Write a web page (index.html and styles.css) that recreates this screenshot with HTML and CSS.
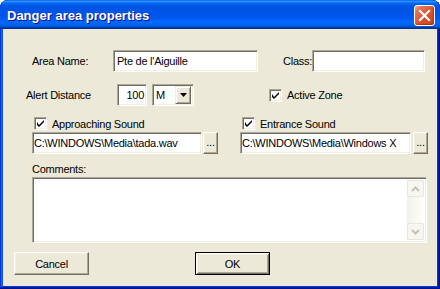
FILE: index.html
```html
<!DOCTYPE html>
<html>
<head>
<meta charset="utf-8">
<link rel="stylesheet" href="styles.css">
</head>
<body>
<div class="window">
  <div class="titlebar">
    <span class="title">Danger area properties</span>
    <button class="close" aria-label="Close">
      <svg width="13" height="13" viewBox="0 0 13 13"><path d="M2 2 L11 11 M11 2 L2 11" stroke="#fff" stroke-width="2.2" stroke-linecap="square"/></svg>
    </button>
  </div>
  <div class="client">
    <div class="row row-name">
      <span class="lbl lbl-name">Area Name:</span>
      <div class="field f-name">Pte de l'Aiguille</div>
      <span class="lbl lbl-class">Class:</span>
      <div class="field f-class"></div>
    </div>
    <div class="row row-alert">
      <span class="lbl lbl-alert">Alert Distance</span>
      <div class="field f-dist">100</div>
      <div class="field combo">
        <span class="combo-val">M</span>
        <span class="combo-btn"><svg width="7" height="4" viewBox="0 0 7 4"><path d="M0 0 H7 L3.5 4 Z" fill="#000"/></svg></span>
      </div>
      <div class="check check-active"><span class="box"><svg width="7" height="7" viewBox="0 0 7 7"><path d="M0 2 V5 L2 7 L7 2 V0 L2 5 Z" fill="#000"/></svg></span><span>Active Zone</span></div>
    </div>
    <div class="sounds">
      <div class="sound">
        <div class="check"><span class="box"><svg width="7" height="7" viewBox="0 0 7 7"><path d="M0 2 V5 L2 7 L7 2 V0 L2 5 Z" fill="#000"/></svg></span><span>Approaching Sound</span></div>
        <div class="path-row">
          <div class="field f-path f-path-l">C:\WINDOWS\Media\tada.wav</div>
          <button class="btn browse">...</button>
        </div>
      </div>
      <div class="sound">
        <div class="check"><span class="box"><svg width="7" height="7" viewBox="0 0 7 7"><path d="M0 2 V5 L2 7 L7 2 V0 L2 5 Z" fill="#000"/></svg></span><span>Entrance Sound</span></div>
        <div class="path-row">
          <div class="field f-path f-path-r">C:\WINDOWS\Media\Windows X</div>
          <button class="btn browse browse-r">...</button>
        </div>
      </div>
    </div>
    <div class="comments">
      <div class="lbl lbl-comments">Comments:</div>
      <div class="field memo">
        <div class="memo-text"></div>
        <div class="vscroll">
          <span class="sb-btn"><svg width="9" height="6" viewBox="0 0 9 6"><path d="M1 5 L4.5 1.5 L8 5" fill="none" stroke="#C5C2B2" stroke-width="2"/></svg></span>
          <span class="sb-track"></span>
          <span class="sb-btn"><svg width="9" height="6" viewBox="0 0 9 6"><path d="M1 1 L4.5 4.5 L8 1" fill="none" stroke="#C5C2B2" stroke-width="2"/></svg></span>
        </div>
      </div>
    </div>
    <div class="actions">
      <button class="btn btn-cancel">Cancel</button>
      <button class="btn btn-ok">OK</button>
    </div>
  </div>
</div>
</body>
</html>
```
FILE: styles.css
```css
* { box-sizing: border-box; }
body {
  margin: 0;
  font-family: "Liberation Sans", Arial, sans-serif;
  font-size: 11px;
  letter-spacing: -0.25px;
  color: #000;
  background: #fff;
}
.window {
  width: 440px;
  height: 289px;
  display: flex;
  flex-direction: column;
  background: #0855DD;
  border-radius: 8px 8px 0 0;
  overflow: hidden;
  box-shadow: inset -1px -1px #00138c, inset 1px 1px #0831d9, inset -2px -2px #001ea0, inset 2px 2px #166aee, inset -3px -3px #003bda, inset 3px 3px #0855dd;
}
.titlebar {
  flex: none;
  height: 29px;
  display: flex;
  align-items: center;
  padding: 0 5px 0 7px;
  border-radius: 8px 8px 0 0;
  background: linear-gradient(to bottom, #0058ee 0%, #3593ff 4%, #288eff 6%, #127dff 8%, #036ffc 10%, #0262ee 14%, #0057e5 20%, #0054e3 24%, #0055eb 56%, #005bf5 66%, #026afe 76%, #0062ef 86%, #0052d6 92%, #0040ab 94%, #003092 100%);
}
.title {
  color: #fff;
  font-family: "Liberation Sans", Arial, sans-serif;
  font-weight: bold;
  font-size: 13px;
  letter-spacing: 0;
  padding-top: 2px;
  text-shadow: 1px 1px #0f1089;
}
.close {
  margin-left: auto;
  margin-top: 2px;
  width: 21px;
  height: 21px;
  padding: 0;
  border: 1px solid #fff;
  border-radius: 3px;
  display: flex;
  align-items: center;
  justify-content: center;
  background: linear-gradient(135deg, #f0a48a 0%, #e3714e 22%, #d9552f 55%, #c7421c 100%);
  box-shadow: inset -1px -1px 1px rgba(140,30,0,.5);
}
.client {
  flex: 1;
  margin: 0 3px 3px 3px;
  background: #ECE9D8;
  display: flex;
  flex-direction: column;
}
.row {
  display: flex;
  align-items: center;
  height: 22px;
  flex: none;
}
.field {
  height: 22px;
  background: #fff;
  border: 1px solid;
  border-color: #ACA899 #fff #fff #ACA899;
  box-shadow: inset 1px 1px #716F64, inset -1px -1px #F1EFE2;
  padding: 0 2px;
  display: flex;
  align-items: center;
  white-space: nowrap;
  overflow: hidden;
}
.row-name { margin-top: 21px; }
.lbl-name { margin-left: 29px; width: 81px; }
.f-name { width: 145px; padding-left: 3px; }
.lbl-class { margin-left: 25px; width: 29px; }
.f-class { width: 113px; }
.row-alert { margin-top: 12px; }
.lbl-alert { margin-left: 23px; width: 91px; }
.f-dist { width: 30px; justify-content: flex-end; padding-right: 2px; }
.combo { margin-left: 5px; width: 42px; padding: 2px 2px 2px 3px; }
.combo-val { flex: 1; }
.combo-btn {
  width: 16px;
  height: 18px;
  background: #ECE9D8;
  border: 1px solid;
  border-color: #F1EFE2 #716F64 #716F64 #F1EFE2;
  box-shadow: inset 1px 1px #fff, inset -1px -1px #ACA899;
  display: flex;
  align-items: center;
  justify-content: center;
}
.check {
  display: flex;
  align-items: center;
  gap: 5px;
  height: 13px;
}
.check-active { margin-left: 75px; }
.box {
  width: 13px;
  height: 13px;
  margin-left: 2px;
  background: #fff;
  border: 1px solid;
  border-color: #ACA899 #fff #fff #ACA899;
  box-shadow: inset 1px 1px #716F64, inset -1px -1px #F1EFE2;
  display: flex;
  align-items: center;
  justify-content: center;
}
.check-active .box { margin-left: 0; }
.sounds {
  display: grid;
  grid-template-columns: 208px 190px;
  margin-top: 11px;
  padding-left: 29px;
  flex: none;
}
.path-row {
  display: flex;
  margin-top: 2px;
  height: 22px;
}
.f-path { padding-left: 1px; }
.f-path-l { width: 170px; }
.f-path-r { width: 171px; }
.btn {
  font-family: "Liberation Sans", Arial, sans-serif;
  font-size: 11px;
  letter-spacing: -0.25px;
  color: #000;
  background: #ECE9D8;
  border: 1px solid;
  border-color: #fff #716F64 #716F64 #fff;
  box-shadow: inset -1px -1px #ACA899, inset 1px 1px #F1EFE2;
  padding: 0;
}
.browse {
  width: 15px;
  height: 22px;
  margin-left: 1px;
  line-height: 1;
  display: flex;
  align-items: flex-end;
  justify-content: center;
  padding-bottom: 5px;
}
.browse-r { margin-left: 2px; }
.comments {
  margin-top: 9px;
  padding-left: 29px;
  flex: none;
}
.lbl-comments { line-height: 13px; margin-bottom: 1px; }
.memo {
  width: 395px;
  height: 66px;
  padding: 2px;
  align-items: stretch;
}
.memo-text { flex: 1; }
.vscroll {
  width: 17px;
  display: flex;
  flex-direction: column;
  background: linear-gradient(to right, #F3F1EC, #FEFEFB);
}
.sb-btn {
  height: 17px;
  border: 1px solid #E8E6DA;
  border-radius: 2px;
  background: #F7F6F1;
  display: flex;
  align-items: center;
  justify-content: center;
}
.sb-track { flex: 1; }
.actions {
  display: flex;
  margin-top: 9px;
  height: 23px;
  flex: none;
}
.btn-cancel { margin-left: 11px; width: 75px; }
.btn-ok {
  margin-left: 106px;
  width: 75px;
  border: 1px solid #000;
  box-shadow: inset 1px 1px #fff, inset -1px -1px #716F64, inset 2px 2px #F1EFE2, inset -2px -2px #ACA899;
}
```
